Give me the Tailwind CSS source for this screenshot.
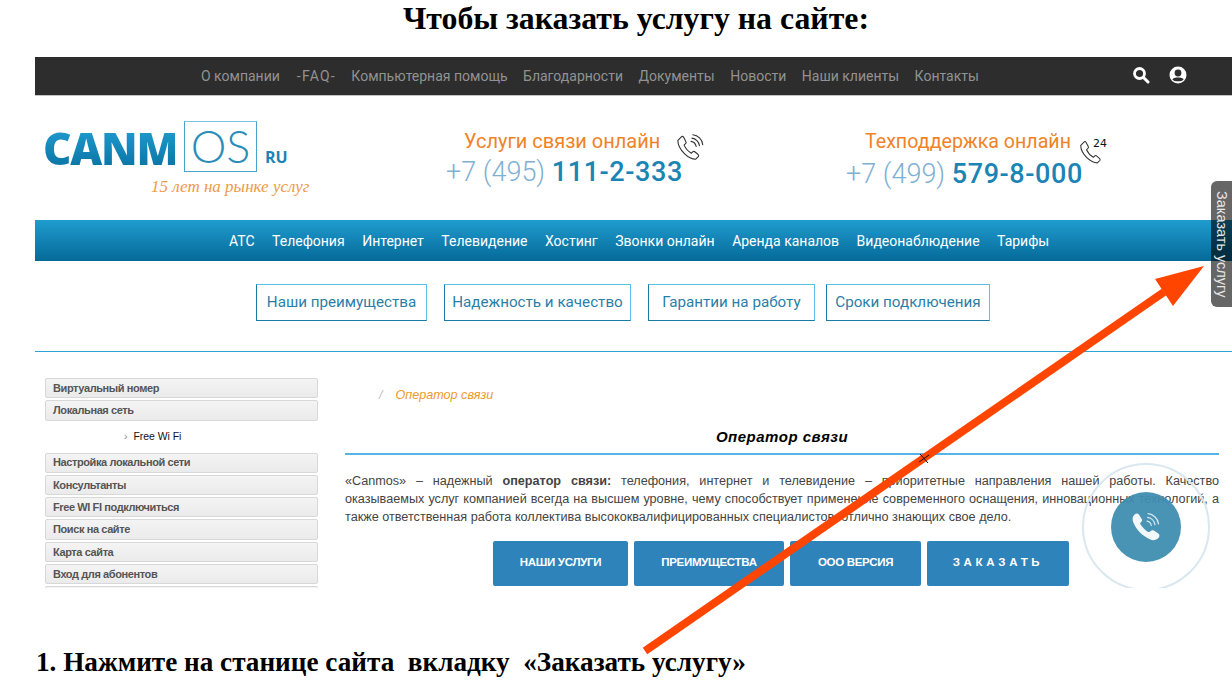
<!DOCTYPE html>
<html lang="ru">
<head>
    <meta charset="UTF-8">
    <title>Чтобы заказать услугу на сайте</title>
    <script src="https://cdn.jsdelivr.net/npm/@tailwindcss/browser@4"></script>
</head>
<body class="bg-white w-[1232px] h-[684px] overflow-hidden relative font-['Liberation_Sans',sans-serif]">
    <!-- Title -->
    <h1 class="h-[57px] pt-[1px] pl-[40px] text-center text-[31.8px] leading-[36px] font-bold text-black font-['Liberation_Serif',serif]">Чтобы заказать услугу на сайте:</h1>

    <!-- Screenshot of the site -->
    <div class="ml-[35px] h-[531px] relative overflow-hidden">
        <!-- Top bar -->
        <div class="h-[39px] bg-[#2d2d2d] border-b border-[#c4c4c4] flex items-center relative font-['Roboto',sans-serif] text-[14px] text-[#929292]">
            <nav class="flex pl-[166px] pt-[1px] gap-[15.5px] whitespace-nowrap">
                <a>О компании</a>
                <a class="ml-[1.5px] tracking-[1.2px]">-FAQ-</a>
                <a>Компьютерная помощь</a>
                <a>Благодарности</a>
                <a>Документы</a>
                <a>Новости</a>
                <a>Наши клиенты</a>
                <a>Контакты</a>
            </nav>
            <div class="absolute left-[1097px] top-[9px] flex gap-[19px] items-center">
                <svg width="18" height="18" viewBox="0 0 18 18" fill="none"><circle cx="7.5" cy="7.5" r="5" stroke="white" stroke-width="2.8"/><path d="M11.5 11.5 L16 16" stroke="white" stroke-width="3" stroke-linecap="round"/></svg>
                <svg width="18" height="18" viewBox="0 0 18 18"><circle cx="9" cy="9" r="8.5" fill="white"/><circle cx="9" cy="7" r="3.4" fill="#2d2d2d"/><path d="M3.4 13.4 C4.5 10.8 13.5 10.8 14.6 13.4 C13 16 5 16 3.4 13.4Z" fill="#2d2d2d"/></svg>
            </div>
        </div>

        <!-- Header with logo and phones -->
        <div class="h-[124px] flex">
            <div class="w-[300px] shrink-0 pl-[8px] pt-[26px]">
                <div class="flex items-start">
                    <span class="w-[132px] text-[44px] leading-[50px] mt-[1px] font-extrabold tracking-[-1.2px] font-['Open_Sans',sans-serif] bg-gradient-to-b from-[#22a0d4] to-[#06709f] bg-clip-text text-transparent">CANM</span>
                    <span class="ml-[9px] -mt-[1px] w-[73px] h-[51px] border border-[#4aa3cf] border-t-[#7cc4e6] text-center text-[45px] leading-[48px] font-light font-['Lato',sans-serif] text-[#2a8cb8]">OS</span>
                    <span class="ml-[8px] mt-[26px] text-[16px] leading-[18px] font-bold font-['Open_Sans',sans-serif] text-[#1c83b3]">RU</span>
                </div>
                <div class="ml-[108px] mt-[2px] text-[17px] leading-[24px] italic whitespace-nowrap font-['Liberation_Serif',serif] text-[#ef9a45]">15 лет на рынке услуг</div>
            </div>
            <div class="w-[400px] shrink-0 pl-[111px] pt-[32px] font-['Roboto',sans-serif] whitespace-nowrap">
                <div class="h-[28px] flex items-start">
                    <span class="ml-[18px] text-[20px] leading-[26px] text-[#f08326]">Услуги связи онлайн</span>
                    <svg class="ml-[16px] mt-[4px] shrink-0" width="30" height="30" viewBox="0 0 32 30" fill="none" stroke="#333" stroke-width="1.2" stroke-linejoin="round" stroke-linecap="round"><path d="M6 4 L2 8 C2 12 5 18 9 22 C13 26 17 28 21 28 L24 25 C24.5 24 24 23.4 23.4 22.8 L19.6 19.8 C19 19.4 18.4 19.6 17.8 20.2 L16.4 21.6 C13.5 20 10 16 8.6 13 L10.4 11.2 C11 10.6 11 10 10.6 9.4 L8 4.4 C7.4 3.6 6.6 3.4 6 4Z"/><path d="M16 9 C19 9.5 21 11.5 21.5 14.5"/><path d="M17 5.5 C21 6 24.5 9.5 25 13.5"/><path d="M18 2 C23.5 2.5 28 7 28.5 12.5"/></svg>
                </div>
                <div class="-mt-[1px] text-[27px] leading-[34px] font-light text-[#7fb0d4]">+7 (495) <span class="font-medium text-[#1a85b5] tracking-[0.6px]">111-2-333</span></div>
            </div>
            <div class="pl-[111px] pt-[33px] font-['Roboto',sans-serif] whitespace-nowrap">
                <div class="h-[29px] flex items-start">
                    <span class="ml-[19px] text-[19.6px] leading-[26px] text-[#f08326]">Техподдержка онлайн</span>
                    <svg class="ml-[8px] mt-[9px] shrink-0" width="28" height="27" viewBox="0 0 32 30" fill="none" stroke="#333" stroke-width="1.2" stroke-linejoin="round"><path d="M6 4 L2 8 C2 12 5 18 9 22 C13 26 17 28 21 28 L24 25 C24.5 24 24 23.4 23.4 22.8 L19.6 19.8 C19 19.4 18.4 19.6 17.8 20.2 L16.4 21.6 C13.5 20 10 16 8.6 13 L10.4 11.2 C11 10.6 11 10 10.6 9.4 L8 4.4 C7.4 3.6 6.6 3.4 6 4Z"/><text x="16" y="10" font-size="12.5" fill="#111" stroke="none" font-family="DejaVu Sans">24</text></svg>
                </div>
                <div class="-mt-[1px] text-[27px] leading-[34px] font-light text-[#7fb0d4]">+7 (499) <span class="font-medium text-[#1a85b5] tracking-[0.6px]">579-8-000</span></div>
            </div>
        </div>

        <!-- Main menu -->
        <nav class="h-[41px] pt-[1px] bg-gradient-to-b from-[#1f9ccf] to-[#056a99] flex items-center pl-[194px] gap-[17.5px] text-white text-[14px] font-['Roboto',sans-serif] whitespace-nowrap">
            <a>АТС</a>
            <a>Телефония</a>
            <a>Интернет</a>
            <a>Телевидение</a>
            <a>Хостинг</a>
            <a>Звонки онлайн</a>
            <a>Аренда каналов</a>
            <a>Видеонаблюдение</a>
            <a>Тарифы</a>
        </nav>

        <!-- Sub menu -->
        <div class="h-[90px] pt-[23px] pl-[221px] flex gap-[17px] font-['Roboto',sans-serif] text-[15.2px] text-[#2a7fa8] whitespace-nowrap">
            <a class="h-[37px] w-[171px] flex items-center justify-center border border-[#5cc0e8] border-l-[#1a7ba8] border-b-[#1a7ba8]">Наши преимущества</a>
            <a class="h-[37px] w-[187px] flex items-center justify-center border border-[#5cc0e8] border-l-[#1a7ba8] border-b-[#1a7ba8]">Надежность и качество</a>
            <a class="h-[37px] w-[167px] flex items-center justify-center border border-[#5cc0e8] border-l-[#1a7ba8] border-b-[#1a7ba8]">Гарантии на работу</a>
            <a class="-ml-[6px] h-[37px] w-[164px] flex items-center justify-center border border-[#5cc0e8] border-l-[#1a7ba8] border-b-[#1a7ba8]">Сроки подключения</a>
        </div>
        <div class="h-px bg-[#2ea3d6]"></div>

        <!-- Page body -->
        <div class="flex pt-[26px]">
            <aside class="ml-[10px] w-[273px] shrink-0 flex flex-col gap-[2px] text-[11px] tracking-[-0.4px] font-bold text-[#555]">
                <a class="h-[20.3px] pl-[7px] flex items-center rounded-[2px] border border-[#d8d8d8] bg-gradient-to-b from-[#f4f4f4] to-[#ebebeb]">Виртуальный номер</a>
                <a class="h-[20.3px] pl-[7px] flex items-center rounded-[2px] border border-[#d8d8d8] bg-gradient-to-b from-[#f4f4f4] to-[#ebebeb]">Локальная сеть</a>
                <div class="h-[28px] pl-[79px] pt-[1px] flex items-center text-[10.4px] tracking-normal font-normal text-[#111]"><span class="text-[#888] mr-[6px]">›</span>Free Wi Fi</div>
                <a class="h-[20.3px] pl-[7px] flex items-center rounded-[2px] border border-[#d8d8d8] bg-gradient-to-b from-[#f4f4f4] to-[#ebebeb]">Настройка локальной сети</a>
                <a class="h-[20.3px] pl-[7px] flex items-center rounded-[2px] border border-[#d8d8d8] bg-gradient-to-b from-[#f4f4f4] to-[#ebebeb]">Консультанты</a>
                <a class="h-[20.3px] pl-[7px] flex items-center rounded-[2px] border border-[#d8d8d8] bg-gradient-to-b from-[#f4f4f4] to-[#ebebeb]">Free WI FI подключиться</a>
                <a class="h-[20.3px] pl-[7px] flex items-center rounded-[2px] border border-[#d8d8d8] bg-gradient-to-b from-[#f4f4f4] to-[#ebebeb]">Поиск на сайте</a>
                <a class="h-[20.3px] pl-[7px] flex items-center rounded-[2px] border border-[#d8d8d8] bg-gradient-to-b from-[#f4f4f4] to-[#ebebeb]">Карта сайта</a>
                <a class="h-[20.3px] pl-[7px] flex items-center rounded-[2px] border border-[#d8d8d8] bg-gradient-to-b from-[#f4f4f4] to-[#ebebeb]">Вход для абонентов</a>
                <a class="h-[20.3px] pl-[7px] flex items-center rounded-[2px] border border-[#d8d8d8] bg-gradient-to-b from-[#f4f4f4] to-[#ebebeb]"></a>
            </aside>
            <main class="ml-[27px] w-[874px] shrink-0">
                <div class="h-[34px] pl-[34px] pt-[9px] text-[12.6px] leading-[16px] italic text-[#ee9a2e]"><span class="text-[#bbb] mr-[13px]">/</span>Оператор связи</div>
                <h2 class="h-[41px] pt-[16px] text-center text-[15px] leading-[18px] italic font-bold text-black tracking-[0.5px]">Оператор связи</h2>
                <div class="h-[1.5px] bg-[#55b5e8]"></div>
                <p class="mt-[17px] text-[12.65px] leading-[18px] text-[#444]">
                    <span class="block whitespace-nowrap text-justify [text-align-last:justify]">«Canmos» – надежный <b>оператор связи:</b> телефония, интернет и телевидение – приоритетные направления нашей работы. Качество</span>
                    <span class="block whitespace-nowrap text-justify [text-align-last:justify]">оказываемых услуг компанией всегда на высшем уровне, чему способствует применение современного оснащения, инновационных технологий, а</span>
                    <span class="block">также ответственная работа коллектива высококвалифицированных специалистов, отлично знающих свое дело.</span>
                </p>
                <div class="mt-[15px] ml-[148px] flex gap-[6px] text-[11.5px] text-white font-bold tracking-[-0.3px] whitespace-nowrap">
                    <a class="w-[135px] h-[45px] flex items-center justify-center rounded-[2px] bg-[#2e83bb]">НАШИ УСЛУГИ</a>
                    <a class="w-[150px] h-[45px] flex items-center justify-center rounded-[2px] bg-[#2e83bb]">ПРЕИМУЩЕСТВА</a>
                    <a class="w-[131px] h-[45px] flex items-center justify-center rounded-[2px] bg-[#2e83bb]">ООО ВЕРСИЯ</a>
                    <a class="w-[142px] h-[45px] flex items-center justify-center rounded-[2px] bg-[#2e83bb] tracking-[3.7px]">ЗАКАЗАТЬ</a>
                </div>
            </main>
        </div>

        <!-- Floating call button -->
        <div class="absolute left-[1047px] top-[406px] w-[128px] h-[128px] rounded-full border-2 border-[#d9e8f0] flex items-center justify-center">
            <div class="w-[70px] h-[70px] rounded-full bg-[#3f8db0]/95 flex items-center justify-center">
                <svg width="34" height="34" viewBox="0 0 32 32" fill="none"><path d="M5 4.5 C6.5 3 8.5 3 9.5 4.5 L12 8.5 C12.6 9.6 12.2 10.6 11.4 11.4 L10.4 12.4 C11.4 15 16 20 19 21 L20.4 19.8 C21.4 19 22.4 18.8 23.4 19.4 L27.6 22 C29 23 29 25 27.6 26.4 C25.5 28.6 22.5 29 19.6 27.6 C12 24 7 18.5 4.2 12 C3 9 3 6.5 5 4.5Z" fill="#f2f7fa"/><path d="M17 10.5 C19 10.8 20.6 12.4 21 14.5 M17.5 7 C20.8 7.4 23.8 10.2 24.4 13.8 M18 3.5 C22.8 4 27.2 8.2 27.8 13" stroke="#d5e6ee" stroke-width="1.2" stroke-linecap="round"/></svg>
            </div>
        </div>
    </div>

    <!-- Side tab -->
    <div class="absolute left-[1211px] top-[181px] w-[21px] h-[126px] rounded-l-[6px] bg-black/60 flex items-center justify-center">
        <span class="[writing-mode:vertical-rl] text-[14.5px] text-[#e6e6e6] whitespace-nowrap">Заказать услугу</span>
    </div>

    <!-- Step caption -->
    <p class="mt-[58px] ml-[36px] text-[27.2px] leading-[32px] font-bold text-black whitespace-pre font-['Liberation_Serif',serif]">1. Нажмите на станице сайта  вкладку  «Заказать услугу»</p>

    <!-- Annotation arrow -->
    <svg class="absolute inset-0 pointer-events-none" width="1232" height="684" viewBox="0 0 1232 684">
        <path d="M645 651 L1164 292" stroke="#ff4500" stroke-width="8"/>
        <polygon points="1204,266 1155,279 1173,306" fill="#ff4500"/>
        <path d="M920 454 L928 463 M919 462 L929 455" stroke="#111" stroke-width="1"/>
    </svg>
</body>
</html>
